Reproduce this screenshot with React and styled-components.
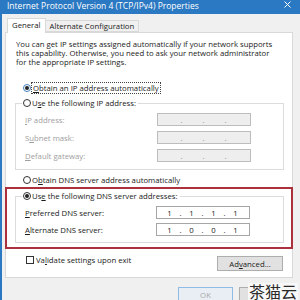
import styled, { createGlobalStyle } from "styled-components";

const GlobalStyle = createGlobalStyle`
  html, body { margin: 0; padding: 0; background: #f0f0f0; }
  body { width: 300px; height: 300px; overflow: hidden; }
  * { box-sizing: border-box; }
`;

const Window = styled.div`
  position: relative;
  width: 300px;
  height: 300px;
  background: #f0f0f0;
  border-left: 2px solid #2b79c2;
  display: flex;
  flex-direction: column;
  overflow: hidden;
  font-family: "Open Sans", "Noto Sans", sans-serif;
  font-size: 7.75px;
  color: #1b1b1b;
`;

const TitleBar = styled.div`
  height: 14px;
  flex: none;
  background: #2b79c2;
  color: #fff;
  display: flex;
  align-items: flex-start;
  padding: 1px 9px 0 5px;
  font-size: 8.5px;
  line-height: 9px;
`;

const Close = styled.svg`
  margin-left: auto;
`;

const Body = styled.div`
  display: flex;
  flex-direction: column;
  padding: 4px 0 0 3px;
`;

const TabStrip = styled.div`
  display: flex;
  align-items: flex-end;
  height: 14px;
  margin-left: 2px;
`;

const Tab = styled.div`
  position: relative;
  z-index: ${(p) => (p.$active ? 1 : 0)};
  height: ${(p) => (p.$active ? "15px" : "12px")};
  margin-bottom: ${(p) => (p.$active ? "-1px" : "0")};
  margin-left: ${(p) => (p.$active ? "0" : "-1px")};
  padding: ${(p) => (p.$active ? "2px 4px 0" : "1px 4px 0")};
  background: ${(p) => (p.$active ? "#fff" : "#f0f0f0")};
  border: 1px solid #d9d9d9;
  border-bottom: ${(p) => (p.$active ? "none" : "1px solid #d9d9d9")};
  line-height: 9px;
  white-space: nowrap;
`;

const Panel = styled.div`
  width: 288px;
  background: #fff;
  border: 1px solid #d9d9d9;
  padding: 7px 8px 6px 9px;
  display: flex;
  flex-direction: column;
`;

const Intro = styled.p`
  margin: 0 0 0 1px;
  line-height: 9px;
  white-space: pre-line;
`;

const Key = styled.span`
  text-decoration: underline;
  text-underline-offset: 1px;
`;

const RadioRow = styled.div`
  display: flex;
  align-items: center;
  gap: 1px;
  height: 12px;
  margin: ${(p) => p.$m || "0"};
  margin-left: 8px;
  white-space: nowrap;
`;

const Radio = styled.span`
  position: relative;
  flex: none;
  width: 8px;
  height: 8px;
  border-radius: 50%;
  border: 1px solid ${(p) => (p.$focus ? "#3f7fc0" : "#333")};
  background: #fff;
  &::after {
    content: "";
    display: ${(p) => (p.$checked ? "block" : "none")};
    position: absolute;
    left: 1px;
    top: 1px;
    width: 4px;
    height: 4px;
    border-radius: 50%;
    background: #222;
  }
`;

const Focus = styled.span`
  outline: 1px dotted #444;
  padding: 0 1px;
  line-height: 10px;
`;

const Group = styled.fieldset`
  margin: ${(p) => p.$m || "0"};
  min-width: 0;
  border: 1px solid #dcdcdc;
  padding: 4px 0 ${(p) => p.$pb || "7px"} 0;
  display: flex;
  flex-direction: column;
  gap: ${(p) => p.$gap || "5px"};
`;

const Legend = styled.legend`
  margin-left: 6px;
  padding: 0 2px 0 1px;
  height: 12px;
  display: flex;
  align-items: center;
  gap: 1px;
  white-space: nowrap;
`;

const FieldRow = styled.div`
  display: flex;
  align-items: center;
  height: 13px;
  padding-left: 9px;
`;

const FieldLabel = styled.span`
  width: ${(p) => p.$w || "132px"};
  color: ${(p) => (p.$disabled ? "#a0a0a0" : "inherit")};
`;

const IpBox = styled.div`
  width: 94px;
  height: 13px;
  display: flex;
  align-items: center;
  padding-left: 4px;
  border: 1px solid ${(p) => (p.$disabled ? "#bdbdbd" : "#a6a6a6")};
  background: ${(p) => (p.$disabled ? "#eeeeee" : "#fff")};
  color: ${(p) => (p.$disabled ? "#8a8a8a" : "#222")};
`;

const Octet = styled.span`
  width: 17px;
  text-align: center;
`;

const Dot = styled.span`
  width: 5px;
  text-align: center;
`;

const Highlight = styled.div`
  margin: 1px -9px 0 -10px;
  border: 2px solid #ab323d;
  padding: 1px 7px 4px 8px;
`;

const BottomRow = styled.div`
  display: flex;
  align-items: flex-start;
  margin-top: 6px;
`;

const CheckLabel = styled.div`
  display: flex;
  align-items: center;
  gap: 2px;
  height: 10px;
  margin-left: 11px;
`;

const CheckBox = styled.span`
  width: 8px;
  height: 8px;
  border: 1px solid #333;
  background: #fff;
`;

const Button = styled.div`
  width: ${(p) => p.$w || "55px"};
  height: ${(p) => p.$h || "16px"};
  display: flex;
  align-items: center;
  justify-content: center;
  border: 1px solid ${(p) => (p.$default ? "#8fbce6" : "#adadad")};
  background: ${(p) => (p.$default ? "#e8eef4" : "#e1e1e1")};
  color: ${(p) => (p.$disabled ? "#a8a8a8" : "#1b1b1b")};
`;

const AdvancedButton = styled(Button)`
  margin: 1px 1px 0 auto;
`;

const Footer = styled.div`
  display: flex;
  justify-content: flex-end;
  gap: 6px;
  margin-top: 9px;
  padding-right: 6px;
`;

const Watermark = styled.div`
  position: absolute;
  right: 2px;
  bottom: 0;
  padding: 0 1px;
  background: #f8f8f8;
  font-family: "Noto Sans CJK SC", sans-serif;
  font-size: 16px;
  line-height: 17px;
  color: #2b2b2b;
`;

const IpField = ({ value, disabled }) => {
  const parts = value ? value.split(".") : ["", "", "", ""];
  return (
    <IpBox $disabled={disabled}>
      {parts.map((p, i) => (
        <span key={i} style={{ display: "contents" }}>
          <Octet>{p}</Octet>
          {i < 3 && <Dot>.</Dot>}
        </span>
      ))}
    </IpBox>
  );
};

export default function App() {
  return (
    <Window>
      <GlobalStyle />
      <TitleBar>
        <span>Internet Protocol Version 4 (TCP/IPv4) Properties</span>
        <Close width="7" height="7" viewBox="0 0 7 7">
          <path d="M0.5 0.5L6.5 6.5M6.5 0.5L0.5 6.5" stroke="#fff" strokeWidth="1" />
        </Close>
      </TitleBar>
      <Body>
        <TabStrip>
          <Tab $active>General</Tab>
          <Tab>Alternate Configuration</Tab>
        </TabStrip>
        <Panel>
          <Intro>
            {"You can get IP settings assigned automatically if your network supports\nthis capability. Otherwise, you need to ask your network administrator\nfor the appropriate IP settings."}
          </Intro>
          <RadioRow $m="15px 0 0">
            <Radio $checked $focus />
            <Focus><Key>O</Key>btain an IP address automatically</Focus>
          </RadioRow>
          <Group $m="3px 0 0">
            <Legend>
              <Radio />
              <span>U<Key>s</Key>e the following IP address:</span>
            </Legend>
            <FieldRow>
              <FieldLabel $disabled><Key>I</Key>P address:</FieldLabel>
              <IpField disabled />
            </FieldRow>
            <FieldRow>
              <FieldLabel $disabled>S<Key>u</Key>bnet mask:</FieldLabel>
              <IpField disabled />
            </FieldRow>
            <FieldRow>
              <FieldLabel $disabled><Key>D</Key>efault gateway:</FieldLabel>
              <IpField disabled />
            </FieldRow>
          </Group>
          <RadioRow $m="4px 0 0">
            <Radio />
            <span>O<Key>b</Key>tain DNS server address automatically</span>
          </RadioRow>
          <Highlight>
            <Group $gap="4px" $pb="6px">
              <Legend>
                <Radio $checked />
                <span>Us<Key>e</Key> the following DNS server addresses:</span>
              </Legend>
              <FieldRow>
                <FieldLabel $w="131px"><Key>P</Key>referred DNS server:</FieldLabel>
                <IpField value="1.1.1.1" />
              </FieldRow>
              <FieldRow>
                <FieldLabel $w="131px"><Key>A</Key>lternate DNS server:</FieldLabel>
                <IpField value="1.0.0.1" />
              </FieldRow>
            </Group>
          </Highlight>
          <BottomRow>
            <CheckLabel>
              <CheckBox />
              <span>Va<Key>l</Key>idate settings upon exit</span>
            </CheckLabel>
            <AdvancedButton $w="66px" $h="15px">
              <span>Ad<Key>v</Key>anced...</span>
            </AdvancedButton>
          </BottomRow>
        </Panel>
        <Footer>
          <Button $default $disabled>OK</Button>
          <Button>Cancel</Button>
        </Footer>
      </Body>
      <Watermark>茶猫云</Watermark>
    </Window>
  );
}
